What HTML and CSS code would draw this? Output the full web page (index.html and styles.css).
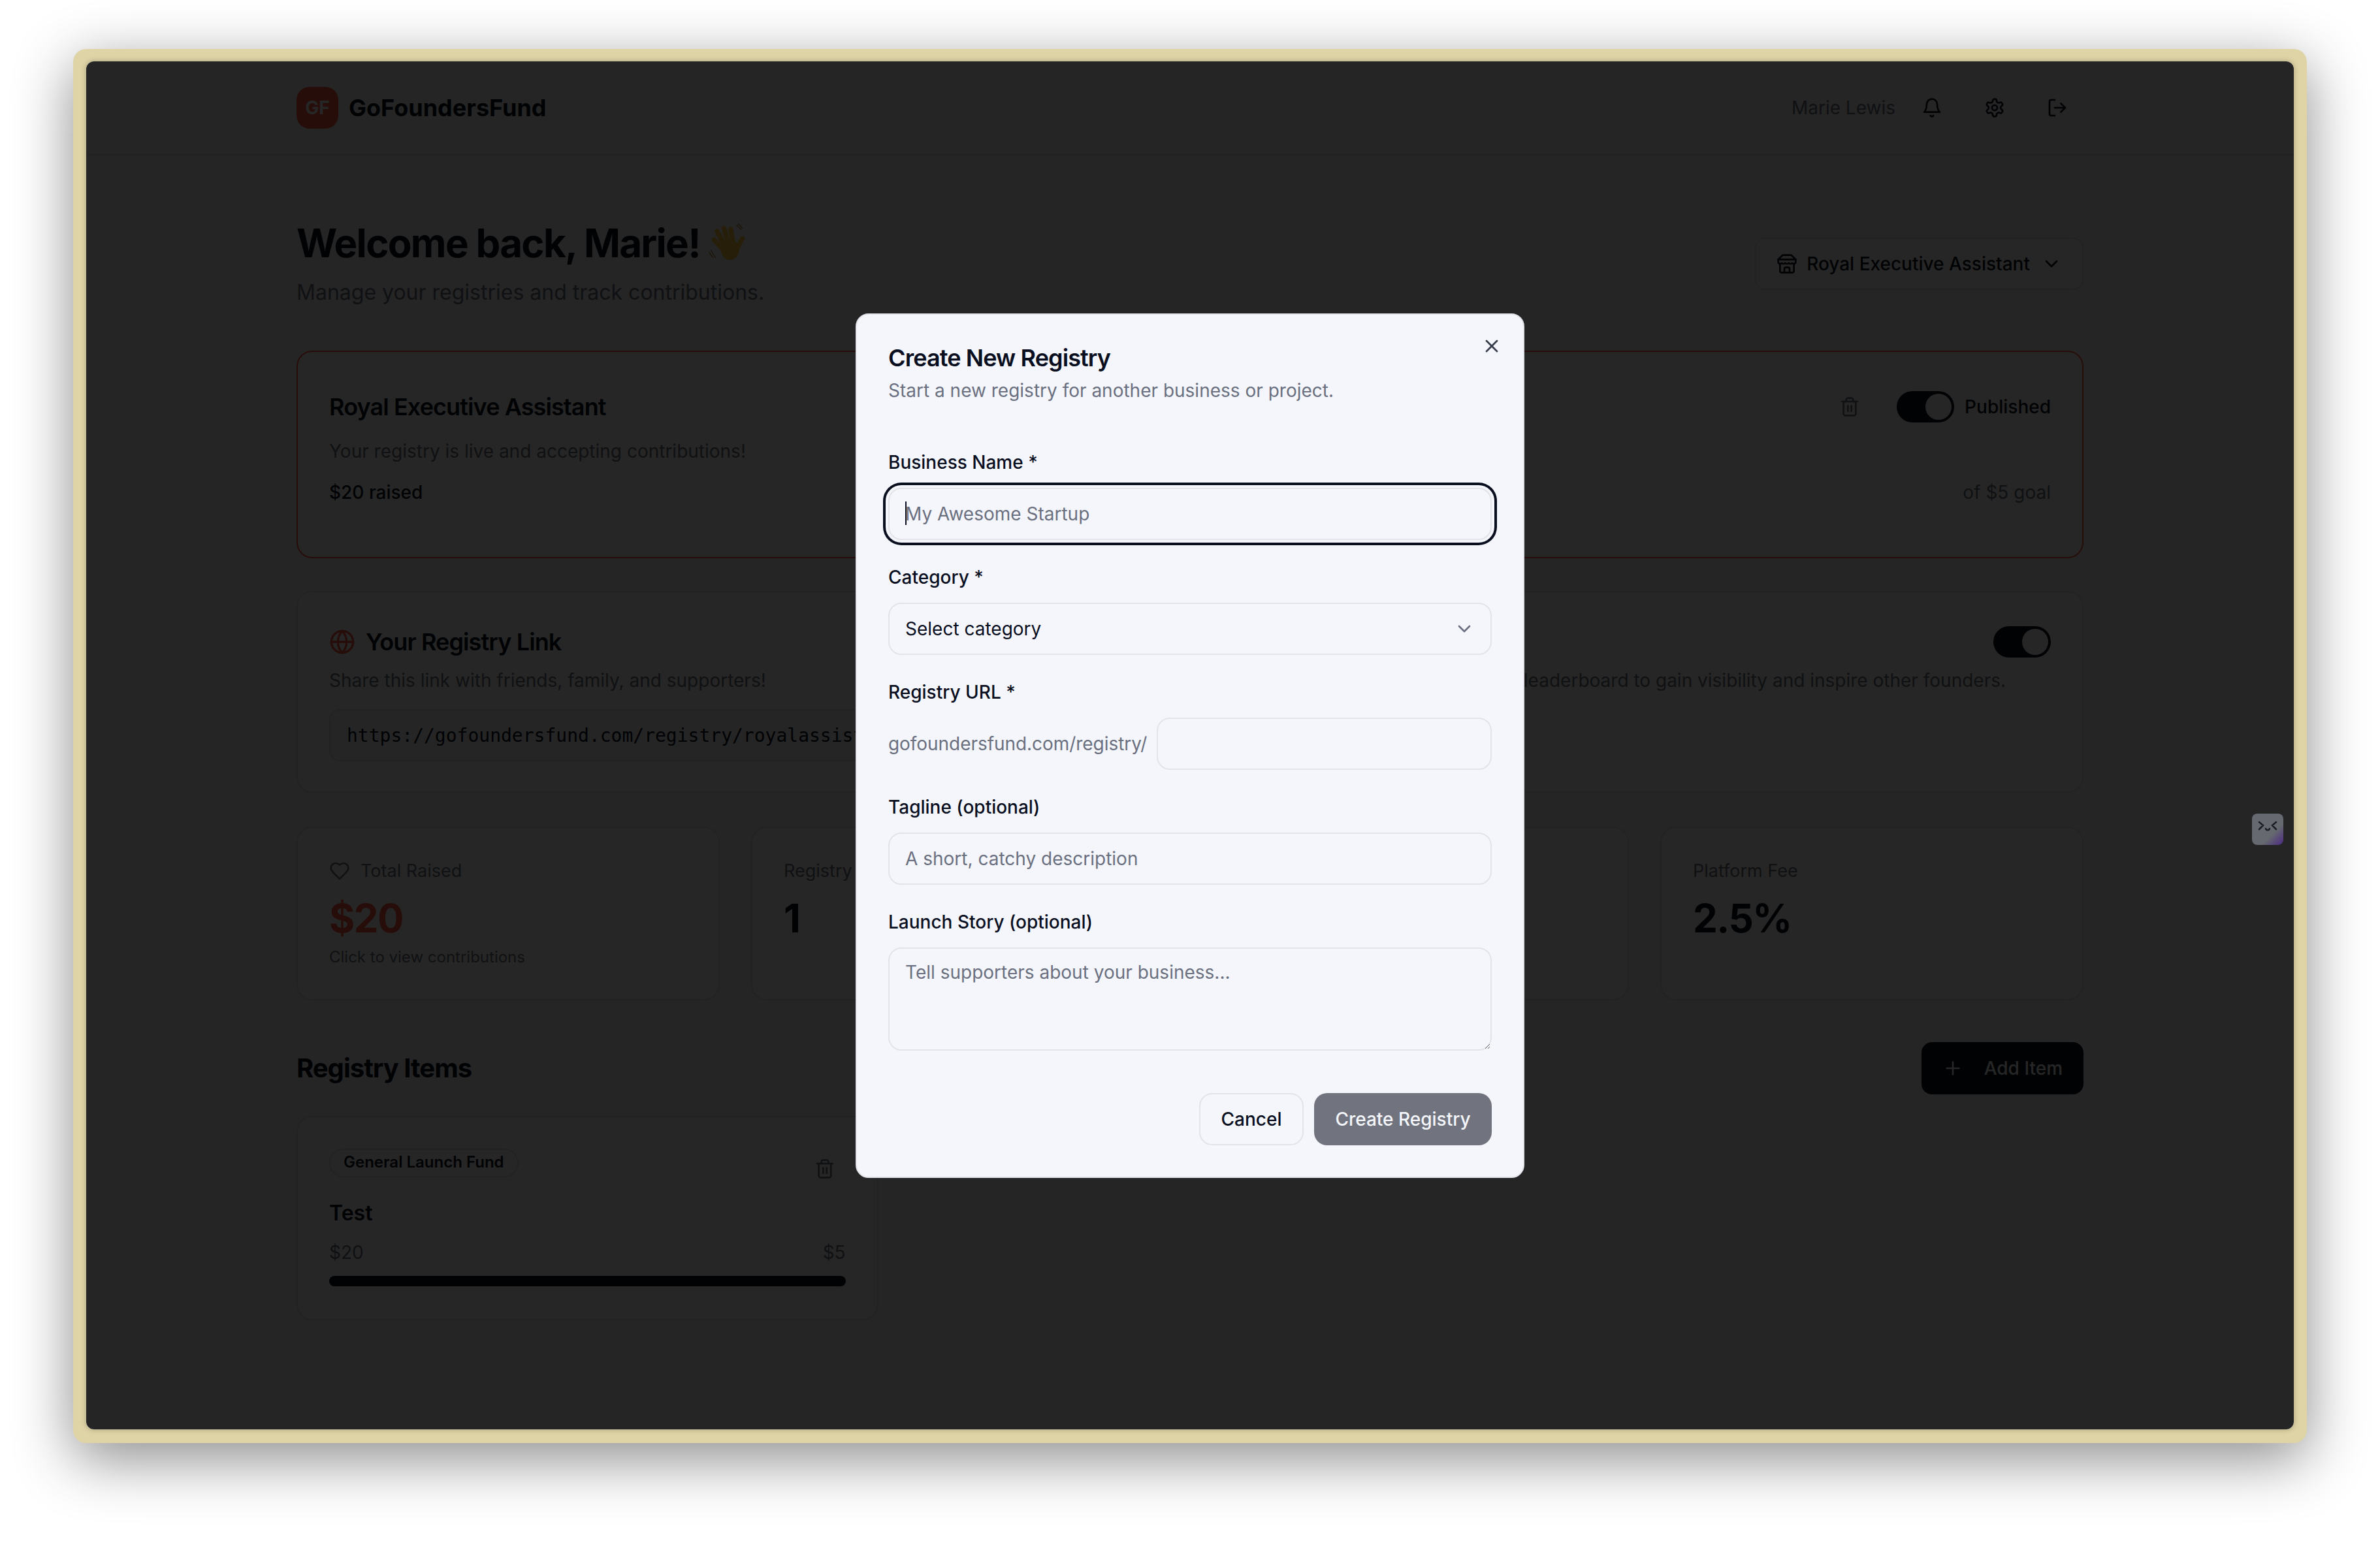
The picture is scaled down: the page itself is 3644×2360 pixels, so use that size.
FILE: index.html
```html
<!DOCTYPE html>
<html lang="en">
<head>
  <meta charset="UTF-8">
  <title>GoFoundersFund - Dashboard</title>
  <link rel="stylesheet" href="styles.css">
</head>
<body>
  <svg class="sprite" aria-hidden="true">
    <symbol id="i-bell" viewBox="0 0 24 24"><path d="M6 8a6 6 0 0 1 12 0c0 7 3 9 3 9H3s3-2 3-9"/><path d="M10.3 21a1.94 1.94 0 0 0 3.4 0"/></symbol>
    <symbol id="i-gear" viewBox="0 0 24 24"><path d="M12.22 2h-.44a2 2 0 0 0-2 2v.18a2 2 0 0 1-1 1.73l-.43.25a2 2 0 0 1-2 0l-.15-.08a2 2 0 0 0-2.73.73l-.22.38a2 2 0 0 0 .73 2.73l.15.1a2 2 0 0 1 1 1.72v.51a2 2 0 0 1-1 1.74l-.15.09a2 2 0 0 0-.73 2.73l.22.38a2 2 0 0 0 2.73.73l.15-.08a2 2 0 0 1 2 0l.43.25a2 2 0 0 1 1 1.73V20a2 2 0 0 0 2 2h.44a2 2 0 0 0 2-2v-.18a2 2 0 0 1 1-1.73l.43-.25a2 2 0 0 1 2 0l.15.08a2 2 0 0 0 2.73-.73l.22-.39a2 2 0 0 0-.73-2.73l-.15-.08a2 2 0 0 1-1-1.74v-.5a2 2 0 0 1 1-1.74l.15-.09a2 2 0 0 0 .73-2.73l-.22-.38a2 2 0 0 0-2.73-.73l-.15.08a2 2 0 0 1-2 0l-.43-.25a2 2 0 0 1-1-1.73V4a2 2 0 0 0-2-2z"/><circle cx="12" cy="12" r="3"/></symbol>
    <symbol id="i-logout" viewBox="0 0 24 24"><path d="M9 21H5a2 2 0 0 1-2-2V5a2 2 0 0 1 2-2h4"/><path d="m16 17 5-5-5-5"/><path d="M21 12H9"/></symbol>
    <symbol id="i-store" viewBox="0 0 24 24"><path d="m2 7 4.41-4.41A2 2 0 0 1 7.83 2h8.34a2 2 0 0 1 1.42.59L22 7"/><path d="M4 12v8a2 2 0 0 0 2 2h12a2 2 0 0 0 2-2v-8"/><path d="M15 22v-4a2 2 0 0 0-2-2h-2a2 2 0 0 0-2 2v4"/><path d="M2 7h20"/><path d="M22 7v3a2 2 0 0 1-2 2a2.7 2.7 0 0 1-1.59-.63.7.7 0 0 0-.82 0A2.7 2.7 0 0 1 16 12a2.7 2.7 0 0 1-1.59-.63.7.7 0 0 0-.82 0A2.7 2.7 0 0 1 12 12a2.7 2.7 0 0 1-1.59-.63.7.7 0 0 0-.82 0A2.7 2.7 0 0 1 8 12a2.7 2.7 0 0 1-1.59-.63.7.7 0 0 0-.82 0A2.7 2.7 0 0 1 4 12a2 2 0 0 1-2-2V7"/></symbol>
    <symbol id="i-chevron" viewBox="0 0 24 24"><path d="m6 9 6 6 6-6"/></symbol>
    <symbol id="i-trash" viewBox="0 0 24 24"><path d="M3 6h18"/><path d="M19 6v14c0 1-1 2-2 2H7c-1 0-2-1-2-2V6"/><path d="M8 6V4c0-1 1-2 2-2h4c1 0 2 1 2 2v2"/><path d="M10 11v6"/><path d="M14 11v6"/></symbol>
    <symbol id="i-globe" viewBox="0 0 24 24"><circle cx="12" cy="12" r="10"/><path d="M12 2a14.5 14.5 0 0 0 0 20 14.5 14.5 0 0 0 0-20"/><path d="M2 12h20"/></symbol>
    <symbol id="i-heart" viewBox="0 0 24 24"><path d="M19 14c1.49-1.46 3-3.21 3-5.5A5.5 5.5 0 0 0 16.5 3c-1.76 0-3 .5-4.5 2-1.5-1.5-2.74-2-4.5-2A5.5 5.5 0 0 0 2 8.5c0 2.3 1.5 4.05 3 5.5l7 7Z"/></symbol>
    <symbol id="i-plus" viewBox="0 0 24 24"><path d="M5 12h14"/><path d="M12 5v14"/></symbol>
    <symbol id="i-x" viewBox="0 0 24 24"><path d="M18 6 6 18"/><path d="m6 6 12 12"/></symbol>
  </svg>

  <div class="frame">
    <div class="app">
      <header class="topbar">
        <div class="topbar-in">
          <div class="brand">
            <span class="logo">GF</span>
            <span class="brand-name">GoFoundersFund</span>
          </div>
          <div class="user">
            <span class="user-name">Marie Lewis</span>
            <button class="icon-btn"><svg class="icon"><use href="#i-bell"/></svg></button>
            <button class="icon-btn"><svg class="icon"><use href="#i-gear"/></svg></button>
            <button class="icon-btn"><svg class="icon"><use href="#i-logout"/></svg></button>
          </div>
        </div>
      </header>

      <main class="content">
        <div class="welcome">
          <div>
            <h1>Welcome back, Marie!
              <svg class="wave" viewBox="0 0 64 64" role="img" aria-label="waving hand">
                <g class="wave-hand">
                  <path d="M24 42 10 27"/><path d="M27 36 15 13"/><path d="M33 32 26 8"/><path d="M41 32 37 10"/><path d="M47 42 56 25"/>
                </g>
                <ellipse class="wave-palm" cx="36" cy="43" rx="15" ry="17"/>
                <path class="wave-lines" d="M47 3l7 7M50 1l6 7M5 44l7 12M2 47l6 9"/>
              </svg>
            </h1>
            <p class="lead">Manage your registries and track contributions.</p>
          </div>
          <button class="picker">
            <svg class="icon"><use href="#i-store"/></svg>
            <span class="picker-name">Royal Executive Assistant</span>
            <svg class="icon"><use href="#i-chevron"/></svg>
          </button>
        </div>

        <section class="card card-live">
          <div class="live-head">
            <h2>Royal Executive Assistant</h2>
            <div class="live-tools">
              <svg class="icon trash"><use href="#i-trash"/></svg>
              <span class="toggle"><span class="knob"></span></span>
              <span class="strong">Published</span>
            </div>
          </div>
          <p class="muted live-sub">Your registry is live and accepting contributions!</p>
          <div class="split live-money">
            <span class="strong">$20 raised</span>
            <span class="muted">of $5 goal</span>
          </div>
        </section>

        <div class="two-col">
          <section class="card link-card">
            <div class="link-head">
              <svg class="icon-lg red"><use href="#i-globe"/></svg>
              <h2>Your Registry Link</h2>
            </div>
            <p class="muted link-sub">Share this link with friends, family, and supporters!</p>
            <div class="url-box">https://gofoundersfund.com/registry/royalassistant</div>
          </section>
          <section class="card link-card">
            <div class="link-head">
              <h2>Public Leaderboard</h2>
              <span class="toggle push"><span class="knob"></span></span>
            </div>
            <p class="muted link-sub">Show your registry on the public leaderboard to gain visibility and inspire other founders.</p>
          </section>
        </div>

        <div class="stats">
          <section class="card stat">
            <div class="stat-label"><svg class="icon"><use href="#i-heart"/></svg>Total Raised</div>
            <div class="stat-value red">$20</div>
            <div class="stat-note">Click to view contributions</div>
          </section>
          <section class="card stat">
            <div class="stat-label">Registry Items</div>
            <div class="stat-value">1</div>
          </section>
          <section class="card stat">
            <div class="stat-label">Contributors</div>
            <div class="stat-value">1</div>
          </section>
          <section class="card stat">
            <div class="stat-label">Platform Fee</div>
            <div class="stat-value">2.5%</div>
          </section>
        </div>

        <div class="split items-head">
          <h2 class="items-title">Registry Items</h2>
          <button class="add-btn"><svg class="icon"><use href="#i-plus"/></svg>Add Item</button>
        </div>

        <div class="items">
          <section class="card item">
            <div class="item-top">
              <span class="badge">General Launch Fund</span>
              <svg class="icon trash"><use href="#i-trash"/></svg>
            </div>
            <h3>Test</h3>
            <div class="split item-money muted"><span>$20</span><span>$5</span></div>
            <div class="bar"></div>
          </section>
        </div>
      </main>

      <div class="overlay">
        <form class="modal">
          <button type="button" class="modal-close"><svg class="icon"><use href="#i-x"/></svg></button>
          <h2 class="modal-title">Create New Registry</h2>
          <p class="modal-sub">Start a new registry for another business or project.</p>

          <label class="field-label field-first" for="biz">Business Name *</label>
          <div class="focus-wrap">
            <input class="field is-focus" id="biz" type="text" placeholder="My Awesome Startup">
            <span class="caret"></span>
          </div>

          <label class="field-label">Category *</label>
          <button type="button" class="field field-select">Select category<svg class="icon"><use href="#i-chevron"/></svg></button>

          <label class="field-label" for="slug">Registry URL *</label>
          <div class="url-row">
            <span class="url-prefix">gofoundersfund.com/registry/</span>
            <input class="field" id="slug" type="text">
          </div>

          <label class="field-label" for="tag">Tagline (optional)</label>
          <input class="field" id="tag" type="text" placeholder="A short, catchy description">

          <label class="field-label" for="story">Launch Story (optional)</label>
          <textarea class="field field-area" id="story" placeholder="Tell supporters about your business..."></textarea>

          <div class="modal-actions">
            <button type="button" class="btn-cancel">Cancel</button>
            <button type="button" class="btn-create">Create Registry</button>
          </div>
        </form>
      </div>

      <div class="mascot">
        <svg viewBox="0 0 48 48" width="48" height="48">
          <path d="M11 13l6 5-6 6M37 13l-6 5 6 6M21 23c1 3 5 3 6 0"/>
        </svg>
      </div>
    </div>
  </div>
</body>
</html>
```

FILE: styles.css
```css
:root {
  --ink: #0a0f1f;
  --muted: #6b7080;
  --line: #e2e4ea;
  --page: #f4f6fb;
  --red: #ff5a3c;
}
* { box-sizing: border-box; margin: 0; padding: 0; }
html, body { height: 100%; }
body {
  background: #fff;
  padding: 75px 112px 0;
  font-family: Inter, "Liberation Sans", sans-serif;
  font-size: 28px;
  line-height: 40px;
  color: var(--ink);
  overflow: hidden;
}
button, input, textarea { font: inherit; color: inherit; }
button { background: none; border: 0; }
.sprite { display: none; }

.icon, .icon-lg {
  fill: none;
  stroke: currentColor;
  stroke-width: 2;
  stroke-linecap: round;
  stroke-linejoin: round;
  flex: none;
}
.icon { width: 32px; height: 32px; }
.icon-lg { width: 40px; height: 40px; }

/* beige screenshot frame */
.frame {
  width: 3420px;
  height: 2135px;
  padding: 19px 20px 21px;
  background: #dfd4a6;
  border-radius: 20px;
  box-shadow: 0 24px 90px rgba(0, 0, 0, 0.46);
}
.app {
  position: relative;
  height: 100%;
  background: var(--page);
  border-radius: 12px;
  overflow: hidden;
  box-shadow: 0 0 8px rgba(0, 0, 0, 0.25);
}

/* top bar */
.topbar { height: 144px; border-bottom: 2px solid var(--line); }
.topbar-in, .content { width: 2736px; margin: 0 auto; }
.topbar-in { height: 142px; display: flex; align-items: center; justify-content: space-between; }
.brand { display: flex; align-items: center; gap: 16px; }
.logo {
  width: 64px;
  height: 64px;
  border-radius: 20px;
  background: var(--red);
  color: #fff;
  font-weight: 700;
  display: flex;
  align-items: center;
  justify-content: center;
}
.brand-name { font-size: 36px; font-weight: 700; }
.user { display: flex; align-items: center; gap: 16px; }
.user-name { color: var(--muted); }
.icon-btn { width: 80px; height: 80px; display: flex; align-items: center; justify-content: center; }

/* page */
.content { padding-top: 98px; }
.welcome { display: flex; align-items: center; justify-content: space-between; }
h1 { font-size: 60px; line-height: 72px; font-weight: 700; letter-spacing: -1.7px; display: flex; align-items: center; gap: 12px; }
.wave { width: 60px; height: 60px; }
.wave-hand path { fill: none; stroke: #ffcb3d; stroke-width: 8; stroke-linecap: round; }
.wave-palm { fill: #ffcb3d; }
.wave-lines { fill: none; stroke: #b8902a; stroke-width: 1.5; stroke-linecap: round; }
.lead { margin-top: 16px; font-size: 32px; line-height: 48px; color: var(--muted); }
.picker {
  height: 80px;
  padding: 0 31px;
  display: flex;
  align-items: center;
  background: #fff;
  border: 2px solid var(--line);
  border-radius: 16px;
  font-weight: 500;
}
.picker-name { margin: 0 17px 0 14px; }

.card { background: #fff; border: 2px solid var(--line); border-radius: 24px; }
.muted { color: var(--muted); }
.red { color: var(--red); }
.strong { font-weight: 500; }
.split { display: flex; align-items: center; justify-content: space-between; }
.trash { color: var(--muted); }
h2 { font-size: 36px; font-weight: 600; letter-spacing: -0.9px; }

.card-live { margin-top: 65px; height: 318px; padding: 48px; border-color: var(--red); }
.live-head { height: 72px; display: flex; align-items: center; justify-content: space-between; }
.live-tools { display: flex; align-items: center; gap: 16px; }
.live-tools .trash { margin-right: 40px; }
.live-sub { margin-top: 12px; }
.live-money { margin-top: 23px; }

.toggle { width: 88px; height: 48px; padding: 4px; border-radius: 24px; background: var(--ink); display: flex; justify-content: flex-end; }
.toggle.push { margin-left: auto; }
.knob { width: 40px; height: 40px; border-radius: 50%; background: #fff; }

.two-col { margin-top: 50px; display: grid; grid-template-columns: 1fr 1fr; gap: 48px; }
.link-card { height: 309px; padding: 48px; }
.link-head { height: 56px; display: flex; align-items: center; gap: 16px; }
.link-sub { margin-top: 11px; }
.url-box {
  margin-top: 24px;
  height: 80px;
  padding: 0 25px;
  background: var(--page);
  border: 2px solid var(--line);
  border-radius: 16px;
  font-family: "DejaVu Sans Mono", monospace;
  line-height: 78px;
  white-space: nowrap;
  overflow: hidden;
}

.stats { margin-top: 52px; display: grid; grid-template-columns: repeat(4, 1fr); gap: 48px; }
.stat { height: 266px; padding: 46px 48px 0; }
.stat-label { display: flex; align-items: center; gap: 16px; font-size: 27px; color: var(--muted); }
.stat-value { margin-top: 16px; font-size: 60px; line-height: 72px; font-weight: 700; letter-spacing: -1.5px; }
.stat-note { margin-top: 8px; font-size: 24px; line-height: 32px; color: var(--muted); }

.items-head { margin-top: 64px; }
.items-title { font-size: 40px; font-weight: 700; letter-spacing: -1px; }
.add-btn {
  height: 80px;
  padding: 0 32px;
  display: flex;
  align-items: center;
  gap: 32px;
  border-radius: 16px;
  background: var(--ink);
  color: #fff;
  font-weight: 500;
}
.items { margin-top: 33px; display: grid; grid-template-columns: repeat(3, 1fr); gap: 32px; }
.item { height: 313px; padding: 48px 48px 0; }
.item-top { height: 64px; display: flex; align-items: flex-start; justify-content: space-between; }
.item-top .trash { margin: 15px 16px 0 0; }
.badge {
  height: 44px;
  padding: 0 20px;
  border: 2px solid var(--line);
  border-radius: 22px;
  font-size: 24px;
  line-height: 38px;
  font-weight: 600;
}
h3 { margin-top: 11px; font-size: 32px; line-height: 48px; font-weight: 600; }
.item-money { margin-top: 16px; }
.bar { margin-top: 16px; height: 16px; border-radius: 8px; background: var(--ink); }

/* dialog */
.overlay {
  position: absolute;
  inset: 0;
  background: rgba(0, 0, 0, 0.85);
  display: flex;
  align-items: center;
  justify-content: center;
}
.modal {
  position: relative;
  width: 1024px;
  height: 1324px;
  padding: 48px;
  background: var(--page);
  border: 2px solid var(--line);
  border-radius: 20px;
  display: flex;
  flex-direction: column;
}
.modal-close { position: absolute; right: 32px; top: 32px; width: 32px; height: 32px; opacity: 0.8; }
.modal-title { font-size: 36px; line-height: 36px; font-weight: 600; letter-spacing: -0.9px; }
.modal-sub { margin-top: 12px; color: var(--muted); }
.field-label { display: block; margin: 37px 0 19px; font-weight: 500; }
.field-first { margin-top: 70px; }
.field {
  display: block;
  width: 100%;
  height: 80px;
  padding: 0 24px;
  background: var(--page);
  border: 2px solid var(--line);
  border-radius: 20px;
  outline: 0;
}
.field::placeholder { color: var(--muted); opacity: 1; }
.focus-wrap { position: relative; }
.is-focus { box-shadow: 0 0 0 4px var(--page), 0 0 0 8px var(--ink); }
.caret { position: absolute; left: 26px; top: 21px; width: 2px; height: 36px; background: var(--ink); }
.field-select { display: flex; align-items: center; justify-content: space-between; text-align: left; }
.field-select .icon { color: var(--muted); }
.url-row { display: flex; align-items: center; gap: 15px; }
.url-prefix { color: var(--muted); white-space: nowrap; letter-spacing: -0.05px; }
.field-area { height: 158px; padding-top: 16px; padding-bottom: 16px; resize: vertical; }
.modal-actions { margin-top: auto; display: flex; justify-content: flex-end; gap: 16px; }
.modal-actions button { height: 80px; border-radius: 20px; font-weight: 500; }
.btn-cancel { width: 160px; border: 2px solid var(--line); }
.btn-create { width: 272px; background: #71747e; color: #f4f6fb; }

/* browser extension tab */
.mascot {
  position: absolute;
  right: 16px;
  top: 1152px;
  width: 48px;
  height: 48px;
  border-radius: 8px;
  background: linear-gradient(135deg, #66696f 65%, #4b2a82);
}
.mascot svg { display: block; fill: none; stroke: #1c1d24; stroke-width: 2.5; stroke-linecap: round; }
```
